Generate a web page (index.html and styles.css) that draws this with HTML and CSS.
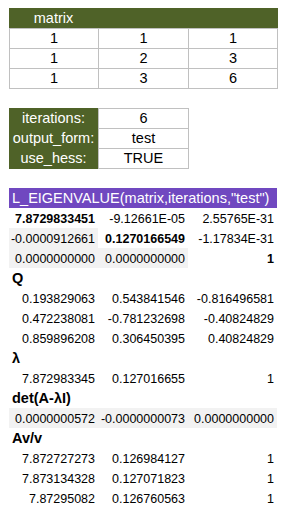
FILE: index.html
```html
<!DOCTYPE html>
<html>
<head>
<meta charset="utf-8">
<link rel="stylesheet" href="styles.css">
</head>
<body>
<div class="sheet">
  <div class="matrix">
    <div class="matrix-head"><span class="matrix-title">matrix</span></div>
    <div class="matrix-grid">
      <div class="mcell">1</div><div class="mcell">1</div><div class="mcell">1</div>
      <div class="mcell">1</div><div class="mcell">2</div><div class="mcell">3</div>
      <div class="mcell">1</div><div class="mcell">3</div><div class="mcell">6</div>
    </div>
  </div>

  <div class="params">
    <div class="plabel">iterations:</div><div class="pval">6</div>
    <div class="plabel">output_form:</div><div class="pval">test</div>
    <div class="plabel">use_hess:</div><div class="pval last">TRUE</div>
  </div>

  <div class="result">
    <div class="formula">L_EIGENVALUE(matrix,iterations,"test")</div>
    <div class="rows">
      <div class="c b">7.8729833451</div><div class="c">-9.12661E-05</div><div class="c">2.55765E-31</div>
      <div class="c g">-0.0000912661</div><div class="c b">0.1270166549</div><div class="c">-1.17834E-31</div>
      <div class="c g">0.0000000000</div><div class="c g">0.0000000000</div><div class="c b">1</div>

      <div class="sect">Q</div>
      <div class="c">0.193829063</div><div class="c">0.543841546</div><div class="c">-0.816496581</div>
      <div class="c">0.472238081</div><div class="c">-0.781232698</div><div class="c">-0.40824829</div>
      <div class="c">0.859896208</div><div class="c">0.306450395</div><div class="c">0.40824829</div>

      <div class="sect">λ</div>
      <div class="c">7.872983345</div><div class="c">0.127016655</div><div class="c">1</div>

      <div class="sect">det(A-λI)</div>
      <div class="c g">0.0000000572</div><div class="c g">-0.0000000073</div><div class="c g">0.0000000000</div>

      <div class="sect">Av/v</div>
      <div class="c">7.872727273</div><div class="c">0.126984127</div><div class="c">1</div>
      <div class="c">7.873134328</div><div class="c">0.127071823</div><div class="c">1</div>
      <div class="c">7.87295082</div><div class="c">0.126760563</div><div class="c">1</div>
    </div>
  </div>
</div>
</body>
</html>
```

FILE: styles.css
```css
html, body {
  margin: 0;
  padding: 0;
  background: #ffffff;
}

body {
  font-family: "Liberation Sans", Arial, sans-serif;
  color: #000000;
}

.sheet {
  padding: 8px 0 0 9px;
  display: flex;
  flex-direction: column;
}

.matrix {
  width: 269px;
  display: flex;
  flex-direction: column;
}

.matrix-head {
  height: 20px;
  background: #4f6228;
  display: flex;
  align-items: center;
}

.matrix-title {
  width: 89px;
  text-align: center;
  color: #ffffff;
  font-size: 14.5px;
  line-height: 20px;
}

.matrix-grid {
  display: grid;
  grid-template-columns: 88px 89px 88px;
  grid-auto-rows: 19px;
  gap: 1px;
  padding: 1px;
  background: #c0c0c0;
}

.mcell {
  background: #ffffff;
  font-size: 14.5px;
  line-height: 19px;
  text-align: center;
}

.params {
  margin-top: 19px;
  width: 180px;
  display: grid;
  grid-template-columns: 89px 91px;
}

.plabel {
  background: #4f6228;
  color: #ffffff;
  font-size: 14.5px;
  text-align: center;
  line-height: 19px;
  padding-top: 1px;
}

.pval {
  border: 1px solid #c0c0c0;
  border-bottom: none;
  font-size: 14.5px;
  line-height: 19px;
  text-align: center;
}

.pval.last {
  border-bottom: 1px solid #c0c0c0;
}

.result {
  margin-top: 19px;
  width: 268px;
  display: flex;
  flex-direction: column;
}

.formula {
  height: 20px;
  background: #7048c0;
  color: #ffffff;
  font-size: 14.5px;
  line-height: 20px;
  padding-left: 3px;
  white-space: nowrap;
}

.rows {
  display: grid;
  grid-template-columns: 89px 90px 89px;
  grid-auto-rows: 20px;
}

.c {
  font-size: 12.5px;
  text-align: right;
  padding-right: 3px;
  display: flex;
  align-items: flex-end;
  justify-content: flex-end;
  padding-bottom: 2px;
  line-height: 14px;
  white-space: nowrap;
}

.c.b {
  font-weight: bold;
}

.c.g {
  background: #f2f2f2;
}

.sect {
  grid-column: 1 / 4;
  font-size: 14.5px;
  font-weight: bold;
  padding-left: 3px;
  line-height: 20px;
}
```
